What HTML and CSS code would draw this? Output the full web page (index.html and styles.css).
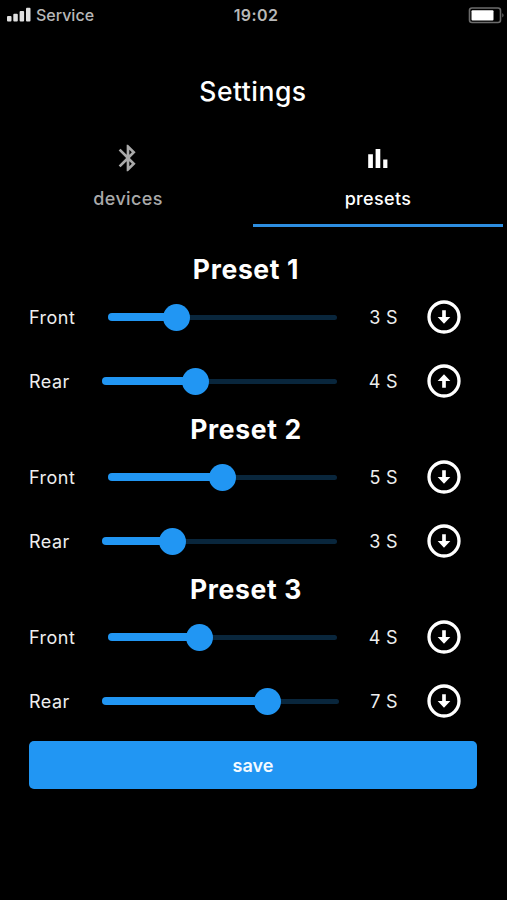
FILE: index.html
```html
<!DOCTYPE html>
<html lang="en">
<head>
<meta charset="utf-8">
<title>Settings</title>
<link rel="stylesheet" href="styles.css">
</head>
<body>
<svg class="defs" width="0" height="0" aria-hidden="true">
  <symbol id="arrow-down" viewBox="0 0 24 24"><circle cx="12" cy="12" r="9" fill="none" stroke="currentColor" stroke-width="2"/><path fill="currentColor" d="M13.1 8h-2.2v4H8.2l3.8 4 3.8-4h-2.7z"/></symbol>
  <symbol id="arrow-up" viewBox="0 0 24 24"><circle cx="12" cy="12" r="9" fill="none" stroke="currentColor" stroke-width="2"/><path fill="currentColor" d="M10.9 16h2.2v-4h2.7L12 8l-3.8 4h2.7z"/></symbol>
</svg>
<header class="status">
  <div class="carrier">
    <svg class="signal" width="24" height="15" viewBox="0 0 24 15"><rect x="0" y="9" width="4.5" height="5.5" rx="1"/><rect x="6.3" y="6.8" width="4.5" height="7.7" rx="1"/><rect x="12.6" y="3.9" width="4.5" height="10.6" rx="1"/><rect x="19" y="0.8" width="4.5" height="13.7" rx="1"/></svg>
    <span>Service</span>
  </div>
  <time class="clock">19:02</time>
  <svg class="battery" width="37" height="17" viewBox="0 0 37 17"><rect x="1.5" y="1" width="31" height="14.5" rx="2.5" fill="none" stroke="#6c6c6c" stroke-width="1.6"/><rect x="3.5" y="3.2" width="22" height="10.2" rx="1" fill="#fff"/><path d="M34.3 6q2.5 2.3 0 4.6z" fill="#6c6c6c"/></svg>
</header>
<h1 class="title">Settings</h1>
<nav class="tabs">
  <a class="tab">
    <svg width="32" height="32" viewBox="0 0 24 24" fill="currentColor"><path d="M17.71 7.71 12 2h-1v7.59L6.41 5 5 6.41 10.59 12 5 17.59 6.41 19 11 14.41V22h1l5.71-5.71-4.3-4.29zM13 5.83l1.88 1.88L13 9.59zm1.88 10.46L13 18.17v-3.76z"/></svg>
    <span>devices</span>
  </a>
  <a class="tab active">
    <svg width="32" height="32" viewBox="0 0 32 32" fill="currentColor"><path d="M6.2 12.3h4.7V26H6.2zM13.6 7h4.7v19h-4.7zM21.2 17.6h4.2V26h-4.2z"/></svg>
    <span>presets</span>
  </a>
</nav>
<main class="content">
  <section>
    <h2>Preset 1</h2>
    <div class="row"><span class="label front">Front</span><div class="slider" style="--v:30%"><i class="fill"></i><i class="thumb"></i></div><span class="value">3 S</span><svg class="dir"><use href="#arrow-down"/></svg></div>
    <div class="row"><span class="label rear">Rear</span><div class="slider" style="--v:40%"><i class="fill"></i><i class="thumb"></i></div><span class="value">4 S</span><svg class="dir"><use href="#arrow-up"/></svg></div>
  </section>
  <section>
    <h2>Preset 2</h2>
    <div class="row"><span class="label front">Front</span><div class="slider" style="--v:50%"><i class="fill"></i><i class="thumb"></i></div><span class="value">5 S</span><svg class="dir"><use href="#arrow-down"/></svg></div>
    <div class="row"><span class="label rear">Rear</span><div class="slider" style="--v:30%"><i class="fill"></i><i class="thumb"></i></div><span class="value">3 S</span><svg class="dir"><use href="#arrow-down"/></svg></div>
  </section>
  <section>
    <h2>Preset 3</h2>
    <div class="row"><span class="label front">Front</span><div class="slider" style="--v:40%"><i class="fill"></i><i class="thumb"></i></div><span class="value">4 S</span><svg class="dir"><use href="#arrow-down"/></svg></div>
    <div class="row"><span class="label rear">Rear</span><div class="slider" style="--v:70%"><i class="fill"></i><i class="thumb"></i></div><span class="value narrow">7 S</span><svg class="dir"><use href="#arrow-down"/></svg></div>
  </section>
  <button class="save">save</button>
</main>
</body>
</html>
```
FILE: styles.css
```css
* { box-sizing: border-box; }
body {
  margin: 0;
  height: 900px;
  overflow: hidden;
  background: #000;
  color: #fff;
  font-family: Inter, "Liberation Sans", sans-serif;
  font-size: 18px;
}
.defs { display: block; height: 0; }
svg { flex: none; }
.status {
  display: grid;
  grid-template-columns: 1fr auto 1fr;
  align-items: center;
  height: 30px;
  padding: 0 2px 0 7px;
  color: #b8b8b8;
}
.carrier {
  display: flex;
  align-items: center;
  gap: 5px;
  font-size: 16px;
  font-weight: 500;
}
.signal { margin-top: -2px; fill: #e0e0e0; }
.clock { font-size: 16px; font-weight: 600; letter-spacing: 0.4px; }
.battery { justify-self: end; }
.title {
  display: flex;
  align-items: center;
  justify-content: center;
  height: 112px;
  margin: 0 1px 0 0;
  padding-top: 9px;
  font-size: 26.5px;
  font-weight: 500;
  letter-spacing: 0.5px;
}
.tabs { display: flex; height: 85px; margin: 0 4px 0 3px; }
.tab {
  flex: 1;
  display: flex;
  flex-direction: column;
  align-items: center;
  gap: 13px;
  color: #aaa;
  font-weight: 500;
  line-height: 24px;
  letter-spacing: 0.35px;
  border-bottom: 3px solid transparent;
}
.active { color: #fff; border-color: #2d8ee0; }
.content { padding: 26px 30px 0 29px; }
h2 {
  display: flex;
  align-items: center;
  justify-content: center;
  height: 32px;
  margin: 0 0 0 -14px;
  font-size: 26.5px;
  font-weight: 700;
  letter-spacing: 0.65px;
}
.row { display: flex; align-items: center; height: 64px; color: #eee; }
.label { white-space: nowrap; letter-spacing: 0.5px; }
.front { width: 79px; }
.rear { width: 72.5px; }
.slider { position: relative; flex: 1; height: 5px; border-radius: 3px; background: #09263c; }
.fill {
  position: absolute;
  left: 0;
  top: -1.5px;
  width: var(--v);
  height: 8px;
  border-radius: 4px;
  background: #2196f3;
}
.thumb {
  position: absolute;
  left: var(--v);
  top: -11px;
  width: 27px;
  height: 27px;
  margin-left: -13.5px;
  border-radius: 50%;
  background: #2196f3;
}
.value { width: 61px; text-align: right; white-space: nowrap; letter-spacing: 0.35px; }
.narrow { width: 59.5px; }
.dir { width: 40px; height: 40px; margin: 0 13px 0 26px; color: #fff; }
.save {
  display: block;
  width: 448px;
  height: 48px;
  margin: 8px 0 0;
  padding: 0;
  border: 0;
  border-radius: 5px;
  background: #2196f3;
  color: #f4faff;
  font: inherit;
  font-weight: 600;
}
```
